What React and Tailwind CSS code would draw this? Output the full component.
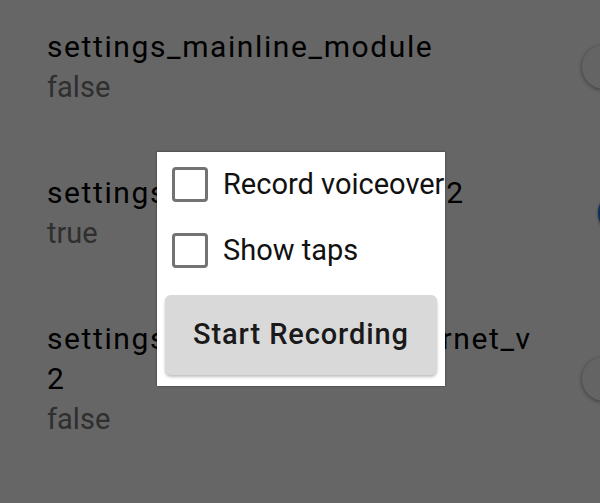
import React, { useState } from 'react';

const FLAGS = [
  { name: 'settings_mainline_module', value: false },
  { name: 'settings_data_usage_tab_v2', value: true },
  { name: 'settings_network_and_internet_v', tail: '2', value: false }
];

function Switch({ on }) {
  if (on) {
    return <div className="w-[44px] h-[44px] shrink-0 ml-[53px] rounded-full bg-[#1a73e8] shadow-[0_1px_3px_rgba(0,0,0,0.5)]" />;
  }
  return <div className="w-[44px] h-[44px] shrink-0 ml-[37px] rounded-full bg-[#fafafa] shadow-[0_1px_4px_rgba(0,0,0,0.45)]" />;
}

function FlagRow({ flag }) {
  return (
    <div className="flex items-center pl-[47px]">
      <div className="w-[498px] shrink-0">
        <div className="text-[30px] leading-[40px] tracking-[1.6px] text-black whitespace-nowrap">
          {flag.name}
          {flag.tail && (<><br />{flag.tail}</>)}
        </div>
        <div className="text-[29px] leading-[40px] text-[#757575]">{flag.value ? 'true' : 'false'}</div>
      </div>
      <Switch on={flag.value} />
    </div>
  );
}

export default function App() {
  const [voiceover, setVoiceover] = useState(false);
  const [taps, setTaps] = useState(false);

  return (
    <div className="relative w-[600px] h-[503px] overflow-hidden bg-white font-['Roboto',sans-serif]">
      <div className="flex flex-col gap-[66px] pt-[27px]">
        {FLAGS.map((f) => <FlagRow key={f.name} flag={f} />)}
      </div>

      <div className="absolute inset-0 bg-black/60" />

      <div className="absolute left-[157px] top-[152px] w-[288px] h-[234px] overflow-hidden bg-white shadow-[0_0_2px_rgba(0,0,0,0.5)] flex flex-col">
        <label className="flex items-center h-[35px] mt-[15px] pl-[15px] whitespace-nowrap cursor-pointer" onClick={() => setVoiceover(!voiceover)}>
          <span className="w-[36px] h-[35px] shrink-0 rounded-[4px] border-[3px] border-[#737373] bg-white" />
          <span className="ml-[15px] text-[29px] text-[#111]">Record voiceover</span>
        </label>
        <label className="flex items-center h-[35px] mt-[31px] pl-[15px] whitespace-nowrap cursor-pointer" onClick={() => setTaps(!taps)}>
          <span className="w-[36px] h-[35px] shrink-0 rounded-[4px] border-[3px] border-[#737373] bg-white" />
          <span className="ml-[15px] text-[29px] text-[#111]">Show taps</span>
        </label>
        <button className="mx-[8px] mt-[27px] h-[80px] rounded-[6px] bg-[#d9d9d9] shadow-[0_2px_3px_rgba(0,0,0,0.25)] text-[29px] font-medium tracking-[0.9px] text-[#1a1a1a]">
          Start Recording
        </button>
      </div>
    </div>
  );
}
